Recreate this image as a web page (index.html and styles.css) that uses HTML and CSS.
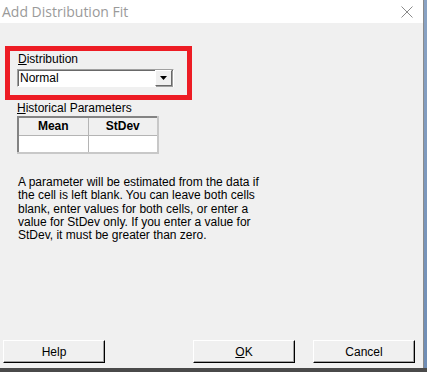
FILE: index.html
```html
<!DOCTYPE html>
<html lang="en">
<head>
  <meta charset="UTF-8" />
  <title>Add Distribution Fit</title>
  <link rel="stylesheet" href="styles.css">
</head>
<body>

  <div class="screen">
    <div class="dialog">
      <div class="title-bar">
        <span class="title">Add Distribution Fit</span>
        <svg class="close" width="12" height="12" viewBox="0 0 12 12">
          <path d="M0.5 0.5 L11.5 11.5 M11.5 0.5 L0.5 11.5" stroke="#8a8a8a" stroke-width="1" fill="none" />
        </svg>
      </div>

      <div class="content">
        <div class="highlight">
          <div class="label"><u>D</u>istribution</div>
          <div class="combo">
            <span class="combo-value">Normal</span>
            <span class="combo-button">
              <svg width="7" height="4" viewBox="0 0 7 4"><path d="M0 0 H7 L3.5 4 Z" fill="#000" /></svg>
            </span>
          </div>
        </div>

        <div class="label hist-label"><u>H</u>istorical Parameters</div>
        <table class="params">
          <tr>
            <th>Mean</th>
            <th>StDev</th>
          </tr>
          <tr>
            <td></td>
            <td></td>
          </tr>
        </table>

        <p class="note">
          A parameter will be estimated from the data if<br>
          the cell is left blank. You can leave both cells<br>
          blank, enter values for both cells, or enter a<br>
          value for StDev only. If you enter a value for<br>
          StDev, it must be greater than zero.
        </p>

        <div class="buttons">
          <button class="btn">Help</button>
          <div class="right-buttons">
            <button class="btn"><u>O</u>K</button>
            <button class="btn">Cancel</button>
          </div>
        </div>
      </div>
    </div>
    <div class="side-edge"></div>
  </div>
  <div class="bottom-edge"></div>

</body>
</html>
```

FILE: styles.css
```css
* {
  box-sizing: border-box;
}

body {
  margin: 0;
  font-family: "Liberation Sans", Arial, sans-serif;
  font-size: 12px;
  color: #000;
  background: #5c5c5c;
  width: 427px;
  height: 372px;
  overflow: hidden;
}

.screen {
  display: flex;
  height: 368px;
}

.dialog {
  width: 423px;
  display: flex;
  flex-direction: column;
  background: #f0f0f0;
}

.title-bar {
  height: 23px;
  background: #fff;
  display: flex;
  align-items: center;
  justify-content: space-between;
  padding: 0 10px 1px 2px;
}

.title {
  color: #9a9a9a;
  font-family: "Open Sans", "Liberation Sans", sans-serif;
  font-size: 14px;
}

.close {
  margin-top: 1px;
}

.content {
  flex: 1;
  padding: 23px 8px 0 5px;
  display: flex;
  flex-direction: column;
}

.highlight {
  width: 187px;
  height: 54px;
  border: 5px solid #ed1c24;
  padding: 1px 0 0 8px;
}

.label {
  line-height: 14px;
}

.combo {
  margin: 3px 0 0 -1px;
  width: 157px;
  height: 18px;
  background: #fff;
  border: 1px solid #a0a0a0;
  border-right-color: #fff;
  border-bottom-color: #fff;
  box-shadow: inset 1px 1px 0 #696969;
  display: flex;
  align-items: center;
  justify-content: space-between;
  padding-left: 2px;
}

.combo-value {
  line-height: 14px;
}

.combo-button {
  width: 17px;
  height: 16px;
  background: #f0f0f0;
  border: 1px solid #fff;
  border-right-color: #696969;
  border-bottom-color: #696969;
  box-shadow: 1px 1px 0 #a0a0a0;
  display: flex;
  align-items: center;
  justify-content: center;
  margin-right: 1px;
}

.hist-label {
  margin: 1px 0 0 12px;
}

.params {
  margin: 1px 0 0 12px;
  width: 142px;
  border-collapse: collapse;
  border: 2px solid #838383;
  border-right-color: #c8c8c8;
  border-bottom-color: #c8c8c8;
  background: #fff;
}

.params th,
.params td {
  width: 50%;
  height: 18px;
  border: 1px solid #b4b4b4;
  padding: 0;
}

.params th {
  background: #f0f0f0;
  font-weight: bold;
  font-size: 12px;
  text-align: center;
}

.note {
  margin: 22px 0 0 13px;
  line-height: 13.3px;
}

.buttons {
  margin-top: auto;
  margin-bottom: 5px;
  margin-left: -2px;
  display: flex;
  justify-content: space-between;
}

.right-buttons {
  display: flex;
  gap: 18px;
}

.btn {
  width: 102px;
  height: 23px;
  font-family: inherit;
  font-size: 12px;
  background: #f0f0f0;
  border: 1px solid #fff;
  border-right-color: #000;
  border-bottom-color: #000;
  box-shadow: inset -1px -1px 0 #a0a0a0;
  padding: 0;
}

.side-edge {
  flex: 1;
  border-left: 1px solid #8a8a8a;
  background: linear-gradient(#8aa3c4, #6f8db5);
}

.bottom-edge {
  height: 4px;
  background: #4a4a4a;
}
```
